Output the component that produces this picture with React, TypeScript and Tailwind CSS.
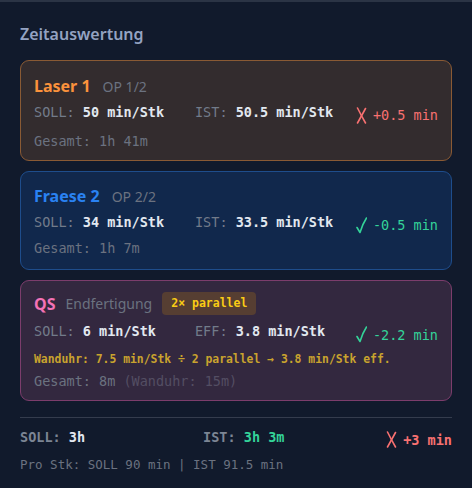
import React from "react";

function Mark({ ok }: { ok: boolean }) {
  return ok ? (
    <svg width="11" height="17" viewBox="0 0 11 17" className="shrink-0">
      <path d="M1 10.5 L4 15.5 Q6.5 7 10.5 1" fill="none" stroke="currentColor" strokeWidth="1.6" strokeLinecap="round" strokeLinejoin="round" />
    </svg>
  ) : (
    <svg width="11" height="17" viewBox="0 0 11 17" className="shrink-0">
      <path d="M1.5 1 Q5 8 9.5 16" fill="none" stroke="currentColor" strokeWidth="1.6" strokeLinecap="round" />
      <path d="M9.5 1.5 Q6 8 1.5 16" fill="none" stroke="currentColor" strokeWidth="1.6" strokeLinecap="round" />
    </svg>
  );
}

function Delta({ ok, text, bold }: { ok: boolean; text: string; bold?: boolean }) {
  return (
    <div className={`flex items-center gap-[6px] ${ok ? "text-[#34d399]" : "text-[#f87171]"} ${bold ? "font-bold" : ""}`}>
      <Mark ok={ok} />
      <span className="font-['DejaVu_Sans_Mono',monospace] text-[13.5px] leading-[18px]">{text}</span>
    </div>
  );
}

function Row({ l1, v1, l2, v2, ok, d }: { l1: string; v1: string; l2: string; v2: string; ok: boolean; d: string }) {
  return (
    <div className="grid grid-cols-[1fr_1fr_auto] items-center font-['DejaVu_Sans_Mono',monospace] text-[13.5px]">
      <div>
        <span className="text-[#727b8a]">{l1}: </span>
        <span className="text-[#e2e8f0] font-semibold">{v1}</span>
      </div>
      <div>
        <span className="text-[#727b8a]">{l2}: </span>
        <span className="text-[#e2e8f0] font-semibold">{v2}</span>
      </div>
      <div className="pt-[6px]">
        <Delta ok={ok} text={d} />
      </div>
    </div>
  );
}

export default function App() {
  return (
    <div className="w-[472px] h-[488px] bg-[#111a2c] border-t-2 border-[#2b3445] font-['Noto_Sans',sans-serif] px-[20px] overflow-hidden">
      <div className="pt-[21px] text-[16px] font-semibold text-[#94a3c2] leading-[22px]">Zeitauswertung</div>

      <div className="mt-[15px] flex flex-col gap-[10px]">
        <div className="rounded-[9px] border border-[#8a5a34] bg-[#332c2e] px-[13px] pt-[13px] pb-[9px]">
          <div className="flex items-baseline gap-[12px]">
            <span className="text-[16px] font-bold text-[#fb923c]">Laser 1</span>
            <span className="text-[14px] text-[#6b7280]">OP 1/2</span>
          </div>
          <div className="mt-[2px]">
            <Row l1="SOLL" v1="50 min/Stk" l2="IST" v2="50.5 min/Stk" ok={false} d="+0.5 min" />
          </div>
          <div className="mt-[7px] font-['DejaVu_Sans_Mono',monospace] text-[13.5px] text-[#6b7280]">Gesamt: 1h 41m</div>
        </div>

        <div className="rounded-[9px] border border-[#1e4d8c] bg-[#11284c] px-[13px] pt-[12px] pb-[10px]">
          <div className="flex items-baseline gap-[12px]">
            <span className="text-[16px] font-bold text-[#2a82f2]">Fraese 2</span>
            <span className="text-[14px] text-[#6b7280]">OP 2/2</span>
          </div>
          <div className="mt-[2px]">
            <Row l1="SOLL" v1="34 min/Stk" l2="IST" v2="33.5 min/Stk" ok={true} d="-0.5 min" />
          </div>
          <div className="mt-[4px] font-['DejaVu_Sans_Mono',monospace] text-[13.5px] text-[#6b7280]">Gesamt: 1h 7m</div>
        </div>

        <div className="rounded-[9px] border border-[#7c3d6c] bg-[#33283f] px-[13px] pt-[11px] pb-[9px]">
          <div className="flex items-center gap-[10px]">
            <span className="text-[16px] font-bold text-[#f472b6]">QS</span>
            <span className="text-[14px] text-[#6b7280]">Endfertigung</span>
            <span className="rounded-[4px] bg-[#563e32] px-[9px] py-[4px] font-['DejaVu_Sans_Mono',monospace] text-[11.5px] leading-[15px] font-bold text-[#facc15]">2× parallel</span>
          </div>
          <div className="mt-[4px]">
            <Row l1="SOLL" v1="6 min/Stk" l2="EFF" v2="3.8 min/Stk" ok={true} d="-2.2 min" />
          </div>
          <div className="mt-[7px] font-['DejaVu_Sans_Mono',monospace] text-[11.4px] font-bold text-[#c9a32e]">
            Wanduhr: 7.5 min/Stk ÷ 2 parallel → 3.8 min/Stk eff.
          </div>
          <div className="mt-[3px] font-['DejaVu_Sans_Mono',monospace] text-[13.5px] text-[#6b7280]">
            Gesamt: 8m <span className="text-[#534e63]">(Wanduhr: 15m)</span>
          </div>
        </div>
      </div>

      <div className="mt-[16px] border-t border-[#343c4d] pt-[8px]">
        <div className="grid grid-cols-[1fr_1fr_auto] items-center font-['DejaVu_Sans_Mono',monospace] text-[13.5px] font-bold">
          <div>
            <span className="text-[#7c8594]">SOLL: </span>
            <span className="text-[#e2e8f0]">3h</span>
          </div>
          <div>
            <span className="text-[#7c8594]">IST: </span>
            <span className="text-[#34d399]">3h 3m</span>
          </div>
          <div className="pt-[5px]">
            <Delta ok={false} text="+3 min" bold />
          </div>
        </div>
        <div className="mt-[7px] font-['DejaVu_Sans_Mono',monospace] text-[12.5px] text-[#6b7280]">
          Pro Stk: SOLL 90 min | IST 91.5 min
        </div>
      </div>
    </div>
  );
}
